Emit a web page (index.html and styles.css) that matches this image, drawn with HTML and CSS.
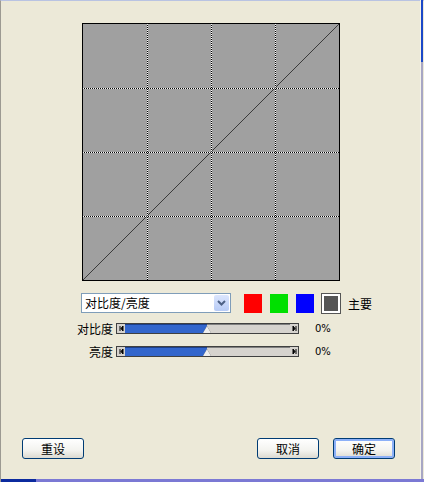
FILE: index.html
```html
<!DOCTYPE html>
<html lang="zh-CN">
<head>
  <meta charset="UTF-8">
  <title>曲线</title>
  <link rel="stylesheet" href="styles.css">
</head>
<body>
  <div class="window">
    <div class="edge-right"></div>
    <div class="content">
      <!-- Curve graph -->
      <div class="curve">
        <svg width="256" height="256" viewBox="0 0 256 256" shape-rendering="crispEdges">
          <g stroke="#000" stroke-width="1">
            <line x1="64.5" y1="0" x2="64.5" y2="256"/>
            <line x1="128.5" y1="0" x2="128.5" y2="256"/>
            <line x1="192.5" y1="0" x2="192.5" y2="256"/>
            <line x1="0" y1="64.5" x2="256" y2="64.5"/>
            <line x1="0" y1="128.5" x2="256" y2="128.5"/>
            <line x1="0" y1="192.5" x2="256" y2="192.5"/>
          </g>
          <g stroke="#fff" stroke-width="1" stroke-dasharray="1 1">
            <line x1="64.5" y1="0" x2="64.5" y2="256"/>
            <line x1="128.5" y1="0" x2="128.5" y2="256"/>
            <line x1="192.5" y1="0" x2="192.5" y2="256"/>
            <line x1="0" y1="64.5" x2="256" y2="64.5"/>
            <line x1="0" y1="128.5" x2="256" y2="128.5"/>
            <line x1="0" y1="192.5" x2="256" y2="192.5"/>
          </g>
          <line x1="0" y1="256" x2="256" y2="0" stroke="#3a3a3a" stroke-width="1" shape-rendering="auto"/>
        </svg>
      </div>

      <!-- Channel row -->
      <div class="channel-row">
        <div class="select">
          <span class="select-text">对比度/亮度</span>
          <span class="select-btn">
            <svg width="9" height="6" viewBox="0 0 9 6"><path d="M1 1 L4.5 4.5 L8 1" fill="none" stroke="#4d6185" stroke-width="2"/></svg>
          </span>
        </div>
        <div class="swatches">
          <span class="swatch red"></span>
          <span class="swatch green"></span>
          <span class="swatch blue"></span>
          <span class="swatch master"></span>
        </div>
        <span class="master-label">主要</span>
      </div>

      <!-- Sliders -->
      <div class="sliders">
        <div class="slider-row">
          <span class="slider-label">对比度</span>
          <div class="track">
            <span class="end-btn"><svg width="5" height="5" viewBox="0 0 5 5"><path d="M1 0 V5 M4 0 L2 2.5 L4 5Z" stroke="#000" fill="#000"/></svg></span>
            <span class="fill"></span>
            <span class="rest"></span>
            <span class="end-btn"><svg width="5" height="5" viewBox="0 0 5 5"><path d="M4 0 V5 M1 0 L3 2.5 L1 5Z" stroke="#000" fill="#000"/></svg></span>
            <span class="thumb"></span>
          </div>
          <span class="slider-value">0%</span>
        </div>
        <div class="slider-row">
          <span class="slider-label">亮度</span>
          <div class="track">
            <span class="end-btn"><svg width="5" height="5" viewBox="0 0 5 5"><path d="M1 0 V5 M4 0 L2 2.5 L4 5Z" stroke="#000" fill="#000"/></svg></span>
            <span class="fill"></span>
            <span class="rest"></span>
            <span class="end-btn"><svg width="5" height="5" viewBox="0 0 5 5"><path d="M4 0 V5 M1 0 L3 2.5 L1 5Z" stroke="#000" fill="#000"/></svg></span>
            <span class="thumb"></span>
          </div>
          <span class="slider-value">0%</span>
        </div>
      </div>

      <!-- Buttons -->
      <div class="buttons">
        <button class="btn">重设</button>
        <div class="btn-group">
          <button class="btn">取消</button>
          <button class="btn default">确定</button>
        </div>
      </div>
    </div>
    <div class="edge-bottom"></div>
  </div>
</body>
</html>
```

FILE: styles.css
```css
body {
  margin: 0;
  font-family: "Noto Sans CJK SC", "Liberation Sans", sans-serif;
  font-size: 12px;
  color: #000;
  background: #ece9d8;
}
.window {
  position: relative;
  width: 424px;
  height: 482px;
  box-sizing: border-box;
  background: #ece9d8;
  border-left: 1px solid #9c9a92;
  border-top: 1px solid #b9c3e2;
  display: flex;
  flex-direction: column;
}
.edge-right {
  position: absolute;
  top: -1px;
  right: 1px;
  width: 3px;
  height: 479px;
  background: linear-gradient(to bottom, #1b48c8 0, #1b48c8 62px, #a7a6c4 62px, #a7a6c4 100%);
  border-left: 1px solid #f4f2ea;
  box-sizing: border-box;
}
.content {
  flex: 1;
  display: flex;
  flex-direction: column;
}
.edge-bottom {
  height: 3px;
  background: linear-gradient(to right, #0b2a9e 0, #0b2a9e 35px, #7b79d4 35px);
}

/* curve graph */
.curve {
  margin: 22px 0 0 81px;
  width: 256px;
  height: 256px;
  border: 1px solid #000;
  background: #a0a0a0;
}
.curve svg {
  display: block;
}

/* channel row */
.channel-row {
  display: flex;
  align-items: center;
  margin: 12px 0 0 80px;
  height: 20px;
}
.select {
  width: 150px;
  height: 20px;
  box-sizing: border-box;
  border: 1px solid #7f9db9;
  background: #fff;
  display: flex;
  align-items: center;
}
.select-text {
  flex: 1;
  padding-left: 3px;
  line-height: 18px;
}
.select-btn {
  width: 15px;
  height: 16px;
  margin-right: 1px;
  border-radius: 2px;
  background: linear-gradient(to bottom, #dce6fd, #b7cbf6);
  display: flex;
  align-items: center;
  justify-content: center;
}
.swatches {
  display: flex;
  gap: 8px;
  margin-left: 13px;
}
.swatch {
  width: 18px;
  height: 19px;
  box-sizing: border-box;
}
.red { background: #ff0000; }
.green { background: #00e000; }
.blue { background: #0000ff; }
.master {
  background: #555;
  border: 2px solid #fff;
  outline: 1px solid #555;
}
.master-label {
  margin-left: 8px;
}

/* sliders */
.sliders {
  margin-top: 10px;
  display: flex;
  flex-direction: column;
  gap: 12px;
}
.slider-row {
  display: flex;
  align-items: center;
  height: 11px;
}
.slider-label {
  width: 112px;
  text-align: right;
  margin-right: 3px;
  line-height: 11px;
}
.track {
  position: relative;
  width: 183px;
  height: 11px;
  box-sizing: border-box;
  border: 1px solid #404040;
  display: flex;
  background: #d6d3ce;
}
.end-btn {
  width: 8px;
  background: #d6d3ce;
  display: flex;
  align-items: center;
  justify-content: center;
}
.fill {
  width: 82px;
  background: #3366cc;
  border-top: 1px solid #1c3f8a;
}
.rest {
  flex: 1;
  background: #d6d3ce;
  border-top: 1px solid #808080;
}
.thumb {
  position: absolute;
  left: 86px;
  bottom: 0;
  width: 0;
  height: 0;
  border-left: 4px solid transparent;
  border-right: 4px solid transparent;
  border-bottom: 7px solid #eeeeee;
  filter: drop-shadow(0 0 0.5px #333);
}
.slider-value {
  margin-left: 16px;
  font-family: "DejaVu Sans", sans-serif;
  font-size: 10px;
  line-height: 11px;
}

/* buttons */
.buttons {
  margin-top: auto;
  margin-bottom: 20px;
  display: flex;
  justify-content: space-between;
  padding: 0 29px 0 21px;
}
.btn-group {
  display: flex;
  gap: 14px;
}
.btn {
  width: 62px;
  height: 21px;
  padding: 0;
  font-family: "Noto Sans CJK SC", sans-serif;
  font-size: 12px;
  color: #000;
  border: 1px solid #003c74;
  border-radius: 3px;
  background: linear-gradient(to bottom, #ffffff 0%, #f3f3ef 60%, #dcdad1 100%);
}
.btn.default {
  box-shadow: inset 0 0 0 2px #8cb0f8;
}
```
